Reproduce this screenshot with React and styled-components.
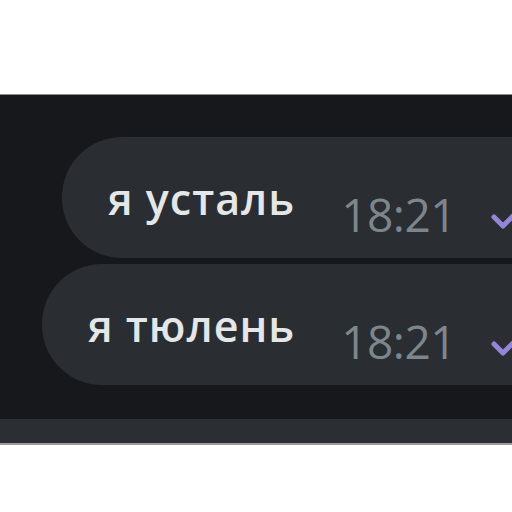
import React from 'react'
import styled, { createGlobalStyle } from 'styled-components'

const Global = createGlobalStyle`
  html, body {
    margin: 0;
    background: #ffffff;
    font-family: "Open Sans", "Noto Sans", sans-serif;
  }
`

const Page = styled.div`
  width: 512px;
  height: 512px;
  overflow: hidden;
  padding-top: 94px;
  box-sizing: border-box;
`

const Chat = styled.div`
  display: flex;
  flex-direction: column;
  align-items: flex-end;
  gap: 6px;
  height: 325px;
  padding-top: 42px;
  box-sizing: border-box;
  background: #17181b;
  border-top: 1px solid #8a8c90;
`

const Bubble = styled.div`
  display: flex;
  align-items: center;
  height: 121px;
  margin-right: -38px;
  padding: 0 30px 0 46px;
  box-sizing: border-box;
  border-radius: 60px 0 0 60px;
  background: #2a2d31;
`

const Text = styled.span`
  font-size: 43px;
  font-weight: 550;
  letter-spacing: 1px;
  color: #e4e6e8;
  white-space: nowrap;
  margin-top: 2px;
`

const Time = styled.span`
  margin-left: 46px;
  margin-top: 32px;
  font-size: 46px;
  letter-spacing: -0.5px;
  color: #7d868c;
`

const Check = styled.svg`
  margin-left: 34px;
  margin-top: 46px;
  flex-shrink: 0;
`

const Composer = styled.div`
  height: 24px;
  background: #2b2e32;
  border-bottom: 2px solid #9a9c9f;
`

const Tick = () => (
  <Check width="30" height="24" viewBox="0 0 30 24">
    <path d="M4 8 L13 17 L27 3" fill="none" stroke="#9585d6" strokeWidth="5" strokeLinecap="round" strokeLinejoin="round" />
  </Check>
)

const messages = ['я усталь', 'я тюлень']

export default function App() {
  return (
    <Page>
      <Global />
      <Chat>
        {messages.map((m) => (
          <Bubble key={m}>
            <Text>{m}</Text>
            <Time>18:21</Time>
            <Tick />
          </Bubble>
        ))}
      </Chat>
      <Composer />
    </Page>
  )
}
